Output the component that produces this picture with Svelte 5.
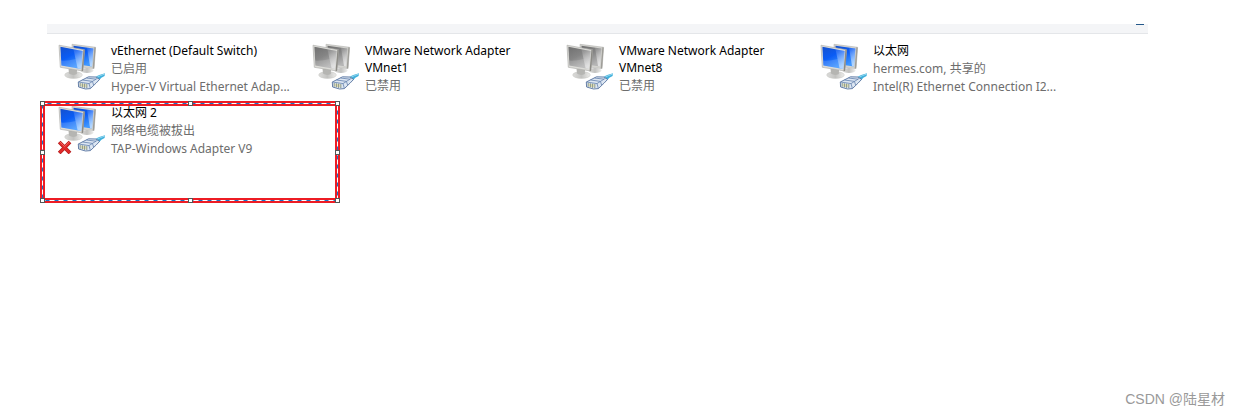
<script lang="ts">
  type Adapter = {
    name: string;
    status: string;
    device?: string;
    disabled?: boolean;
    unplugged?: boolean;
  };

  const adapters: Adapter[] = [
    { name: 'vEthernet (Default Switch)', status: '已启用', device: 'Hyper-V Virtual Ethernet Adap...' },
    { name: 'VMware Network Adapter VMnet1', status: '已禁用', disabled: true },
    { name: 'VMware Network Adapter VMnet8', status: '已禁用', disabled: true },
    { name: '以太网', status: 'hermes.com, 共享的', device: 'Intel(R) Ethernet Connection I2...' },
    { name: '以太网 2', status: '网络电缆被拔出', device: 'TAP-Windows Adapter V9', unplugged: true }
  ];

  const handles = [
    [0, 0], [148, 0], [295, 0],
    [0, 49], [295, 49],
    [0, 97], [148, 97], [295, 97]
  ];
</script>

<svg class="defs" aria-hidden="true">
  <defs>
    <linearGradient id="screen-on" x1="0" y1="0" x2="0.5" y2="1">
      <stop offset="0" stop-color="#1550cc" />
      <stop offset="0.5" stop-color="#0a5cf5" />
      <stop offset="1" stop-color="#3f97ff" />
    </linearGradient>
    <linearGradient id="screen-off" x1="0" y1="0" x2="0.5" y2="1">
      <stop offset="0" stop-color="#707070" />
      <stop offset="0.5" stop-color="#858585" />
      <stop offset="1" stop-color="#b5b5b5" />
    </linearGradient>
    <linearGradient id="shine" x1="0" y1="0" x2="0.4" y2="1">
      <stop offset="0" stop-color="#fff" stop-opacity="0.08" />
      <stop offset="1" stop-color="#fff" stop-opacity="0.6" />
    </linearGradient>
    <linearGradient id="stand" x1="0" y1="0" x2="1" y2="0">
      <stop offset="0" stop-color="#dcdcda" />
      <stop offset="0.5" stop-color="#c2c2c0" />
      <stop offset="1" stop-color="#ededeb" />
    </linearGradient>
  </defs>
</svg>

<main>
  <div class="toolbar"><span class="help"></span></div>

  <ul class="adapters">
    {#each adapters as adapter}
      <li class="adapter">
        <svg class="icon" viewBox="0 0 50 50" aria-hidden="true">
          <ellipse cx="31" cy="28.5" rx="6.5" ry="2.5" fill="url(#stand)" />
          <path d="M16 2.3 39.6 5.3 38 26.6 17 24z" fill="#d4d4d0" stroke="#b4b4b0" stroke-width="0.6" />
          <path d="M17.5 3.8 37.4 6.5 36 24.4 18.5 22z" fill={adapter.disabled ? 'url(#screen-off)' : 'url(#screen-on)'} />
          <path d="M31 5.6 37.4 6.5 36 24.4 34 24.1z" fill="url(#shine)" />
          <path d="M38.3 5.2 39.7 5.4 38.1 26.6 36.7 26.3z" fill="#9f9e99" />
          <ellipse cx="17.5" cy="33" rx="8.8" ry="3.4" fill="url(#stand)" stroke="#c4c4c1" stroke-width="0.5" />
          <path d="M12.5 26.5 21 27.8 20.8 32 Q16.5 34.2 13 31.5z" fill="#b5b5b2" />
          <path d="M3 3.2 28.6 7.8 26.8 29 4.3 25.3z" fill="#dcdcd8" stroke="#a8a8a4" stroke-width="0.6" />
          <path d="M4.4 4.8 26.6 8.9 25.1 26.9 5.4 23.6z" fill={adapter.disabled ? 'url(#screen-off)' : 'url(#screen-on)'} />
          <path d="M17.5 7.2 26.6 8.9 25.1 26.9 21.5 26.3z" fill="url(#shine)" />
          <path d="M5.1 18.6 Q12 19 19.7 17L21.5 26.3 5.4 23.6z" fill="#fff" opacity="0.15" />
          <path d="M27.4 7.6 28.8 7.9 27 29 25.6 28.7z" fill="#8c8b86" />
          <path d="M38.5 35.5 Q42 33.5 44 32.8 L49 31.2 48.6 34 Q45 35.6 43 38.2z" fill="#3fb0dc" />
          <path d="M40.5 35.6 Q44 33.6 48.8 32" fill="none" stroke="#a9e0f2" stroke-width="0.8" />
          <path d="M22.3 40 32.5 34.8 40 35 43.6 37.4 40 41.2 34.4 46.6 29.5 47 22.6 45z" fill="#dce6f2" stroke="#58749f" stroke-width="0.9" />
          <path d="M22.5 40 33 41.6 41.5 36.2M33 41.6 34.4 46.4M26.5 38 36.5 39.4M30.5 36 40 37.2M36.5 39.6 37.6 43" fill="none" stroke="#6582ad" stroke-width="0.8" />
          <path d="M24.2 41v3.7M26.4 41.3v4M28.6 41.6v4.3M30.8 42v4" stroke="#74806f" stroke-width="0.8" />
          <path d="M25.3 41.5v3M27.5 42v3M29.7 42v3" stroke="#e0d68a" stroke-width="0.7" />
          {#if adapter.unplugged}
            <path d="M3.2 38 14 49M14 38 3.2 49" stroke="#b01c1c" stroke-width="3.8" />
            <path d="M3.6 38.4 13.6 48.6M13.6 38.4 3.6 48.6" stroke="#e02a2a" stroke-width="2.6" />
            <path d="M4 38 8.6 42.5 13.2 38" fill="none" stroke="#f2706a" stroke-width="0.9" />
          {/if}
        </svg>
        <div class="text">
          <h2>{adapter.name}</h2>
          <p>{adapter.status}</p>
          {#if adapter.device}
            <p>{adapter.device}</p>
          {/if}
        </div>
        {#if adapter.unplugged}
          <svg class="marker" viewBox="0 0 300 102" aria-hidden="true">
            <rect x="2.5" y="2.5" width="295" height="97" fill="none" stroke="#ed1c24" stroke-width="5" />
            <rect x="2.5" y="2.5" width="295" height="97" fill="none" stroke="#1674c8" />
            <rect x="2.5" y="2.5" width="295" height="97" fill="none" stroke="#fff" stroke-dasharray="5 4" />
            {#each handles as [x, y]}
              <rect x={x + 0.5} y={y + 0.5} width="4" height="4" fill="#fff" stroke="#555" />
            {/each}
          </svg>
        {/if}
      </li>
    {/each}
  </ul>

  <footer>CSDN @陆星材</footer>
</main>

<style>
  :global(body) {
    margin: 0;
    background: #fff;
  }

  main {
    display: flex;
    flex-direction: column;
    box-sizing: border-box;
    min-height: 100vh;
    padding-top: 24px;
    font-family: "Noto Sans", "Noto Sans CJK SC", sans-serif;
    font-size: 12px;
    line-height: 17px;
  }

  .defs {
    position: absolute;
    width: 0;
    height: 0;
  }

  .toolbar {
    display: flex;
    justify-content: flex-end;
    height: 9px;
    margin: 0 92px 0 47px;
    padding-right: 4px;
    border-bottom: 1px solid #e4e6e9;
    background: #f4f5f7;
  }

  .toolbar .help {
    width: 8px;
    height: 1px;
    background: #24588a;
  }

  .adapters {
    display: grid;
    grid-template-columns: repeat(auto-fill, 254px);
    row-gap: 9px;
    margin: 0;
    padding: 8px 92px 0 56px;
    list-style: none;
  }

  .adapter {
    position: relative;
    display: flex;
    gap: 5px;
    min-height: 53px;
  }

  .icon {
    flex: none;
    width: 50px;
    height: 50px;
  }

  .text {
    display: flex;
    flex-direction: column;
    gap: 1px;
    width: 190px;
  }

  h2,
  p {
    margin: 0;
    font-size: 12px;
    font-weight: 400;
  }

  h2 {
    color: #000;
  }

  p {
    color: #6d6d6d;
    white-space: nowrap;
  }

  .marker {
    position: absolute;
    top: -3px;
    left: -16px;
    width: 300px;
    height: 102px;
  }

  footer {
    margin-top: auto;
    padding: 0 15px 6px 0;
    color: #999;
    font-family: "Liberation Sans", "Noto Sans CJK SC", sans-serif;
    font-size: 14px;
    line-height: 20px;
    text-align: right;
  }
</style>
